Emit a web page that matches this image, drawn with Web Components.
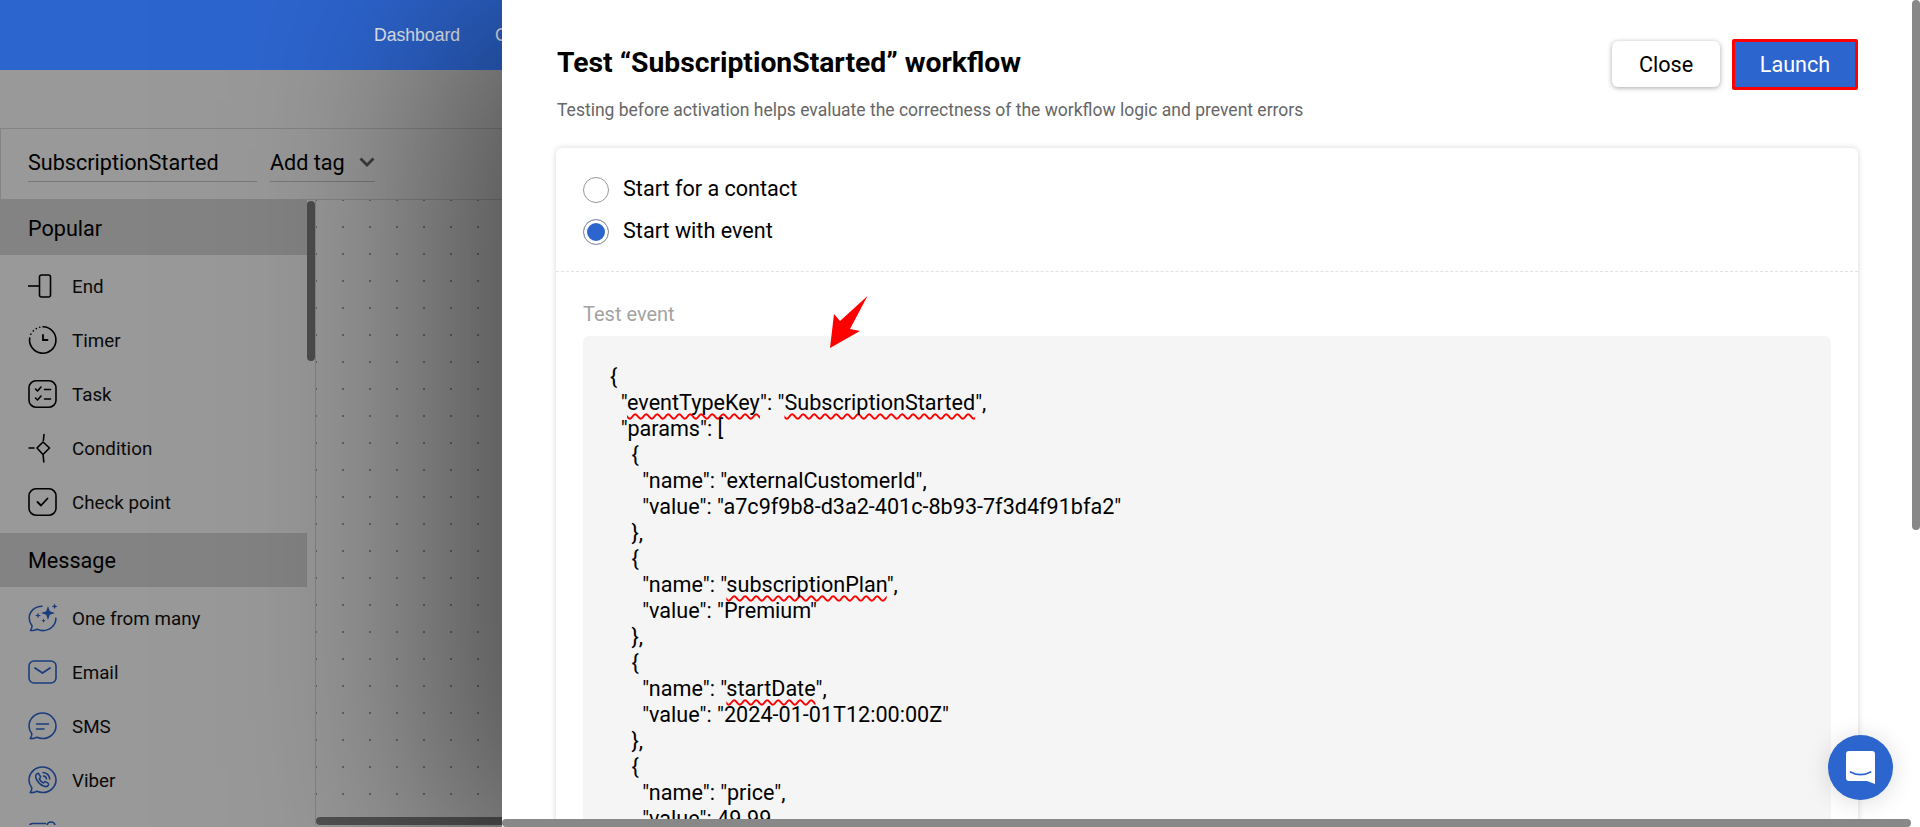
<!DOCTYPE html>
<html lang="en">
<head>
<meta charset="utf-8">
<title>Test workflow</title>
<style>
  html, body { margin: 0; height: 100%; overflow: hidden; background: #fff; }
  body { font-family: Roboto, "Liberation Sans", sans-serif; color: #000; }
  svg { display: block; }
</style>
</head>
<body>
<workflow-page>
  <app-header slot="header"></app-header>
  <workflow-toolbar slot="toolbar" name="SubscriptionStarted"></workflow-toolbar>

  <palette-list slot="palette">
    <palette-section title="Popular">
      <palette-item label="End" icon="end"></palette-item>
      <palette-item label="Timer" icon="timer"></palette-item>
      <palette-item label="Task" icon="task"></palette-item>
      <palette-item label="Condition" icon="condition"></palette-item>
      <palette-item label="Check point" icon="check"></palette-item>
    </palette-section>
    <palette-section title="Message">
      <palette-item label="One from many" icon="spark"></palette-item>
      <palette-item label="Email" icon="email"></palette-item>
      <palette-item label="SMS" icon="sms"></palette-item>
      <palette-item label="Viber" icon="viber"></palette-item>
      <palette-item label="" icon="next"></palette-item>
    </palette-section>
  </palette-list>

  <canvas-grid slot="canvas"></canvas-grid>

  <test-drawer slot="drawer" workflow="SubscriptionStarted">
    <radio-option label="Start for a contact"></radio-option>
    <radio-option label="Start with event" checked></radio-option>
    <code-box slot="code" label="Test event"></code-box>
  </test-drawer>

  <chat-launcher slot="chat"></chat-launcher>
</workflow-page>

<script>
// root: page under the dim layer, then the drawer on top
class WorkflowPage extends HTMLElement {
  constructor() {
    super();
    this.attachShadow({ mode: "open" }).innerHTML = `
<style>
  :host { display: block; position: relative; width: 1920px; height: 827px; overflow: hidden; background: #fff; }
  .page { display: flex; flex-direction: column; height: 825px; overflow: hidden; }
  .gap { height: 58px; flex: none; }
  .editor { flex: 1; display: flex; min-height: 0; }
  .dim { position: absolute; inset: 70px 0 0 0; background: rgba(0,0,0,.4); }
  .top { position: absolute; inset: 0 0 auto 0; }
</style>
<div class="page">
  <div style="height:70px;flex:none"></div>
  <div class="gap"></div>
  <slot name="toolbar"></slot>
  <div class="editor">
    <slot name="palette"></slot>
    <slot name="canvas"></slot>
  </div>
</div>
<div class="dim"></div>
<div class="top"><slot name="header"></slot></div>
<slot name="drawer"></slot>
<slot name="chat"></slot>`;
  }
}

class AppHeader extends HTMLElement {
  constructor() {
    super();
    this.attachShadow({ mode: "open" }).innerHTML = `
<style>
  :host { display: block; height: 70px; background: #2d65cf; }
  nav { display: flex; gap: 35px; padding-left: 374px; height: 100%; align-items: center; color: #e9edf6; font: 400 17.6px "Liberation Sans", sans-serif; }
</style>
<nav><span>Dashboard</span><span>Campaigns</span></nav>`;
  }
}

class WorkflowToolbar extends HTMLElement {
  constructor() {
    super();
    this.attachShadow({ mode: "open" }).innerHTML = `
<style>
  :host { display: flex; box-sizing: border-box; height: 72px; flex: none; border: 1px solid #ddd; border-right: 0; padding: 0 0 0 27px; gap: 13px; font-size: 21.6px; color: #000; }
  .field { height: 53px; box-sizing: border-box; border-bottom: 1px solid #c9c9c9; display: flex; align-items: center; padding-top: 14px; white-space: nowrap; }
  .name { width: 229px; }
  .tag { width: 105px; gap: 14px; }
</style>
<div class="field name">${this.getAttribute("name")}</div>
<div class="field tag">Add tag
  <svg width="16" height="10" viewBox="0 0 16 10"><path d="M1.500 1.500 8 8l6.500-6.500" fill="none" stroke="#666" stroke-width="2.800"/></svg>
</div>`;
  }
}

class PaletteList extends HTMLElement {
  constructor() {
    super();
    this.attachShadow({ mode: "open" }).innerHTML = `
<style>
  :host { display: block; position: relative; width: 315px; flex: none; overflow: hidden; }
  .list { width: 307px; }
  .thumb { position: absolute; top: 1px; right: 0; width: 8px; height: 160px; border-radius: 4px; background: #7f7f7f; }
</style>
<div class="list"><slot></slot></div>
<div class="thumb"></div>`;
  }
}

class PaletteSection extends HTMLElement {
  constructor() {
    super();
    this.attachShadow({ mode: "open" }).innerHTML = `
<style>
  :host { display: block; }
  h3 { margin: 0; height: 54px; display: flex; align-items: center; padding-left: 28px; background: #dadada; font: 400 21.6px Roboto, sans-serif; color: #000; }
  .items { padding: 4px 0; }
  :host(:first-child) h3 { height: 55px; box-sizing: border-box; padding-top: 1px; }
</style>
<h3>${this.getAttribute("title")}</h3>
<div class="items"><slot></slot></div>`;
  }
}

const BLUE = "#2d65cf";
const ICONS = {
  end: `<g fill="none" stroke="#000" stroke-width="1.6"><path d="M0 14h11.5"/><rect x="11.5" y="3" width="11" height="22" rx="2"/></g>`,
  timer: `<g fill="none" stroke="#000" stroke-width="1.6" stroke-linecap="round"><path d="M15 0.8A13.2 13.2 0 1 1 1.7 12"/><path d="M2.800 8.200l.1-.1M5.300 5l.1-.1M8.300 2.600l.1-.1M11.700 1.200l.1 0"/><path d="M15 9v5h4.500" stroke-width="1.800"/></g>`,
  task: `<g fill="none" stroke="#000" stroke-width="1.6" stroke-linecap="round" stroke-linejoin="round"><rect x="1" y="0.8" width="27" height="26.4" rx="7"/><path d="M7.500 9l2 2 3.500-4M7.500 18l2 2 3.500-4M16.500 9.500h6M16.500 19h6"/></g>`,
  condition: `<g fill="none" stroke="#000" stroke-width="1.6" stroke-linecap="round"><path d="M15 8l6.500 6-6.500 6.500L9 14z" stroke-linejoin="round"/><path d="M1 14h5M16 0.500l-.6 6M15.200 21.500l.6 6.500"/></g>`,
  check: `<g fill="none" stroke="#000" stroke-width="1.6" stroke-linecap="round" stroke-linejoin="round"><rect x="1" y="0.8" width="27" height="26.4" rx="7"/><path d="M9.500 14l3.500 3.500 6.500-7" stroke-width="1.800"/></g>`,
  spark: `<g fill="none" stroke="${BLUE}" stroke-width="1.6" stroke-linecap="round" stroke-linejoin="round"><path d="M14 2.300C7 2.300 1.200 7.500 1.200 14c0 3 1 5.600 2.800 7.600.2 1.800-.4 3.400-1.600 4.800 2.800.4 5-.2 6.600-1.200 2 .9 3.400 1.400 5.900 1.400 7 0 13-5.500 13-12.400"/></g><path fill="${BLUE}" d="M20 2l1.800 5.200L27 9l-5.200 1.800L20 16l-1.800-5.200L13 9l5.200-1.800zM26.600-.5l.8 2.100 2.100.8-2.100.8-.8 2.100-.8-2.100-2.100-.8 2.100-.8zM10 8.500l.8 2.200 2.200.8-2.200.8-.8 2.200-.8-2.200-2.200-.8 2.200-.8zM15.500 14.500l.6 1.600 1.600.6-1.600.6-.6 1.600-.6-1.600-1.600-.6 1.600-.6z"/>`,
  email: `<g fill="none" stroke="${BLUE}" stroke-width="1.6" stroke-linecap="round" stroke-linejoin="round"><rect x="1" y="3" width="27" height="22" rx="5"/><path d="M7 10l7.500 5 7.500-5" stroke-width="1.800"/></g>`,
  sms: `<g fill="none" stroke="${BLUE}" stroke-width="1.6" stroke-linecap="round" stroke-linejoin="round"><path d="M14.500 1C7 1 1 6.800 1 14c0 3 1 5.600 2.800 7.700.2 1.800-.4 3.400-1.600 4.800 2.800.4 5-.2 6.700-1.200 1.800.8 3.600 1.200 5.600 1.200C22 26.500 28 20.800 28 14S22 1 14.500 1z"/><path d="M8.500 12h12M8.500 17h7.500"/></g>`,
  viber: `<g fill="none" stroke="${BLUE}" stroke-width="1.6" stroke-linecap="round" stroke-linejoin="round"><path d="M14.500 1C7 1 1 6.800 1 14c0 3 1 5.600 2.800 7.700.2 1.800-.4 3.400-1.600 4.800 2.800.4 5-.2 6.700-1.200 1.800.8 3.600 1.200 5.600 1.200C22 26.500 28 20.800 28 14S22 1 14.500 1z"/><path d="M9.500 7.500c-2 1-2.400 3-1 5.800 1.500 3 4 5.500 7 6.800 2.300 1 4.200.4 5-1.300.3-.7 0-1.300-.6-1.700l-2-1.200c-.6-.4-1.200-.3-1.700.3l-.7.8c-1.700-.7-3.300-2.300-4.200-4.200l.8-.8c.5-.5.6-1.100.2-1.700l-1.200-2c-.3-.7-1-1-1.600-.8z"/><path d="M15 6.500c3.700.3 6.300 3 6.700 6.500M15.500 10c1.800.2 2.800 1.300 3 3"/></g>`,
  next: `<g fill="none" stroke="${BLUE}" stroke-width="1.6" stroke-linecap="round"><path d="M1.500 8V6.500a3 3 0 0 1 3-3h13"/><circle cx="23" cy="6" r="4"/></g>`
};

class PaletteItem extends HTMLElement {
  constructor() {
    super();
    this.attachShadow({ mode: "open" }).innerHTML = `
<style>
  :host { display: flex; align-items: center; height: 54px; padding-left: 28px; gap: 15px; font-size: 18.8px; color: #111; }
  svg { display: block; flex: none; overflow: visible; }
  span { padding-top: 2px; }
</style>
<svg width="29" height="28" viewBox="0 0 29 28">${ICONS[this.getAttribute("icon")]}</svg>
<span>${this.getAttribute("label")}</span>`;
  }
}

class CanvasGrid extends HTMLElement {
  constructor() {
    super();
    this.attachShadow({ mode: "open" }).innerHTML = `
<style>
  :host { display: block; position: relative; flex: 1; border-left: 1px solid #ddd;
    background-image: radial-gradient(circle at 1px 1px, #a8a8a8 0.8px, transparent 1.2px);
    background-size: 27px 27px; background-position: -1px 26px; }
  .thumb { position: absolute; left: 0; right: 0; bottom: 0; height: 8px; border-radius: 4px; background: #888; }
</style>
<div class="thumb"></div>`;
  }
}

class TestDrawer extends HTMLElement {
  constructor() {
    super();
    this.attachShadow({ mode: "open" }).innerHTML = `
<style>
  :host { display: block; position: absolute; top: 0; right: 0; bottom: 0; width: 1418px; background: #fff;
    box-shadow: -37px 20px 200px 20px rgba(0,0,0,.5); }
  .scroll { height: 100%; overflow: hidden; box-sizing: border-box; padding: 38px 62px 0 54px; }
  .head { display: flex; justify-content: space-between; align-items: center; height: 52px; }
  h2 { margin: -4px 0 0; padding-left: 1px; font: 700 28.3px Roboto, sans-serif; color: #000; }
  .sub { margin: 6px 0 0 1px; height: 28px; line-height: 28px; font-size: 17.5px; color: #666; }
  .actions { display: flex; gap: 12px; align-items: center; }
  button { font: 400 21.6px Roboto, sans-serif; box-sizing: border-box; border: 0; cursor: pointer; }
  .close { width: 108px; height: 46px; background: #fff; color: #000; border-radius: 6px; box-shadow: 0 1px 5px rgba(0,0,0,.35); }
  .launch { width: 126px; height: 51px; background: ${BLUE}; color: #fff; border: 3px solid #f00; border-radius: 2px; }
  .card { margin-top: 24px; background: #fff; border-radius: 6px; box-shadow: 0 0 6px rgba(0,0,0,.16); }
  .options { height: 124px; box-sizing: border-box; padding-top: 21px; border-bottom: 1px dashed #e2e2e2; }
  .bar { position: absolute; background: #888; border-radius: 4px; }
  .v { top: 0; right: 0; width: 8px; height: 530px; }
  .h { bottom: 0; left: 0; height: 8px; width: 1409px; }
</style>
<div class="scroll">
  <div class="head">
    <h2>Test “${this.getAttribute("workflow")}” workflow</h2>
    <div class="actions"><button class="close">Close</button><button class="launch">Launch</button></div>
  </div>
  <p class="sub">Testing before activation helps evaluate the correctness of the workflow logic and prevent errors</p>
  <div class="card">
    <div class="options"><slot></slot></div>
    <slot name="code"></slot>
  </div>
</div>
<div class="bar v"></div>
<div class="bar h"></div>`;
  }
}

class RadioOption extends HTMLElement {
  constructor() {
    super();
    const on = this.hasAttribute("checked");
    this.attachShadow({ mode: "open" }).innerHTML = `
<style>
  :host { display: flex; align-items: center; height: 42px; padding-left: 27px; gap: 14px; font-size: 21.6px; color: #000; }
  .dot { width: 26px; height: 26px; flex: none; box-sizing: border-box; border: 1px solid #999; border-radius: 50%; background: ${on ? BLUE : "#fff"}; ${on ? "box-shadow: inset 0 0 0 3px #fff;" : ""} }
  .text { margin-top: -3px; }
</style>
<span class="dot"></span><span class="text">${this.getAttribute("label")}</span>`;
  }
}

const CODE = `{
  "eventTypeKey": "SubscriptionStarted",
  "params": [
    {
      "name": "externalCustomerId",
      "value": "a7c9f9b8-d3a2-401c-8b93-7f3d4f91bfa2"
    },
    {
      "name": "subscriptionPlan",
      "value": "Premium"
    },
    {
      "name": "startDate",
      "value": "2024-01-01T12:00:00Z"
    },
    {
      "name": "price",
      "value": 49.99
    }
  ]
}`;

class CodeBox extends HTMLElement {
  constructor() {
    super();
    // words the browser's spell checker flagged in the shot
    const marked = CODE
      .replace("eventTypeKey", "<u>eventTypeKey</u>")
      .replace('"SubscriptionStarted"', '"<u>SubscriptionStarted</u>"')
      .replace("subscriptionPlan", "<u>subscriptionPlan</u>")
      .replace("startDate", "<u>startDate</u>")
      .split("\n").map(l => `<div>${l}</div>`).join("");
    this.attachShadow({ mode: "open" }).innerHTML = `
<style>
  :host { display: block; position: relative; padding: 32px 27px 40px 27px; }
  label { display: block; height: 21px; line-height: 21px; font-size: 20px; color: #a3a3a3; margin-bottom: 11px; }
  .code { padding: 28px 27px; background: #f5f5f5; border-radius: 6px; font: 400 21.6px/26px Roboto, sans-serif; color: #000; min-height: 600px; white-space: pre; }
  u { text-decoration: underline wavy #f00 1.6px; text-underline-offset: 3px; text-decoration-skip-ink: none; }
  .arrow { position: absolute; left: 274px; top: 24px; }
</style>
<label>${this.getAttribute("label")}</label>
<div class="code">${marked}</div>
<svg class="arrow" width="38" height="52" viewBox="0 0 38 52"><path fill="#f00" d="M0 52 4 18 10 25 37.500 0 20 33 30 35z"/></svg>`;
  }
}

class ChatLauncher extends HTMLElement {
  constructor() {
    super();
    this.attachShadow({ mode: "open" }).innerHTML = `
<style>
  :host { position: absolute; left: 1828px; top: 735px; width: 65px; height: 65px; border-radius: 50%; background: ${BLUE}; display: flex; align-items: center; justify-content: center; box-shadow: 0 2px 24px rgba(0,0,0,.14); }
</style>
<svg width="29" height="33" viewBox="0 0 29 33"><path fill="#fff" d="M3 0h23a3 3 0 0 1 3 3v30l-8-3H3a3 3 0 0 1-3-3V3a3 3 0 0 1 3-3z"/><path d="M4.500 21c6 3.500 14 3.500 20 0" fill="none" stroke="${BLUE}" stroke-width="1.800" stroke-linecap="round"/></svg>`;
  }
}

customElements.define("palette-item", PaletteItem);
customElements.define("palette-section", PaletteSection);
customElements.define("palette-list", PaletteList);
customElements.define("workflow-toolbar", WorkflowToolbar);
customElements.define("app-header", AppHeader);
customElements.define("canvas-grid", CanvasGrid);
customElements.define("radio-option", RadioOption);
customElements.define("code-box", CodeBox);
customElements.define("test-drawer", TestDrawer);
customElements.define("chat-launcher", ChatLauncher);
customElements.define("workflow-page", WorkflowPage);
</script>
</body>
</html>
